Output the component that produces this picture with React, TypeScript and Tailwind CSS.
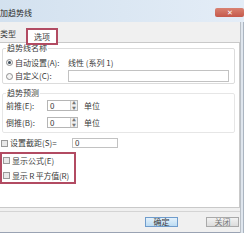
import React from "react";

const font = { fontFamily: '"Noto Sans CJK SC", "Liberation Sans", sans-serif' };

function Radio({ checked }: { checked?: boolean }) {
  return (
    <span className="flex h-[7px] w-[7px] shrink-0 items-center justify-center rounded-full border border-[#8f8f8f] bg-[#f4f4f4]">
      {checked && <span className="h-[3px] w-[3px] rounded-full bg-[#3a4a5a]" />}
    </span>
  );
}

function Check() {
  return <span className="h-[7px] w-[7px] shrink-0 border border-[#9a9a9a] bg-[#e9e9e9]" />;
}

function Spin({ value }: { value: string }) {
  return (
    <div className="flex h-[11px] w-[31px] items-center border border-[#b5b5b5] bg-white">
      <span className="flex-1 pl-[2px] leading-none">{value}</span>
      <div className="flex h-full w-[7px] flex-col border-l border-[#cfcfcf] bg-[#f0f0f0]">
        <span className="flex flex-1 items-center justify-center text-[4px] leading-none text-[#777]">▲</span>
        <span className="flex flex-1 items-center justify-center text-[4px] leading-none text-[#777]">▼</span>
      </div>
    </div>
  );
}

export default function App() {
  return (
    <div className="h-[241px] w-[250px] overflow-hidden bg-white text-[8px] text-[#3a3a3a]" style={font}>
      <div className="w-[244px]">
        {/* title bar */}
        <div className="flex h-[22px] items-start justify-between bg-gradient-to-r from-[#d3e1ef] via-[#dbe7f3] to-[#e4edf7]">
          <span className="mt-[9px] leading-none text-[#2a2a2a]">加趋势线</span>
          <span className="mt-[8px] flex h-[9px] w-[29px] items-center justify-center rounded-[2px] bg-gradient-to-b from-[#d98272] to-[#c4584a] text-[7px] leading-none text-white">
            ✕
          </span>
        </div>

        <div className="flex">
          <div className="flex w-[240px] flex-col bg-[#f0f0f0]">
            {/* tabs */}
            <div className="flex h-[20px] items-end">
              <span className="mb-[4px] leading-none">类型</span>
              <div className="relative z-10 ml-[10px] -mb-[3px] flex h-[17px] w-[32px] items-center justify-center border-2 border-[#b24b62] bg-white">
                <span className="leading-none">选项</span>
              </div>
            </div>

            {/* panel */}
            <div className="flex h-[166px] flex-col border border-l-0 border-[#c9c9c9] bg-white pr-[4px]">
              <fieldset className="ml-[2px] mt-[1px] h-[40px] rounded-[2px] border border-[#dcdcdc] px-[3px]">
                <legend className="px-[1px] leading-none">趋势线名称</legend>
                <div className="mt-[5px] flex h-[11px] items-center gap-[2px]">
                  <Radio checked />
                  <span className="w-[51px] leading-none">自动设置(A):</span>
                  <span className="leading-none">线性 (系列 1)</span>
                </div>
                <div className="mt-[2px] flex h-[12px] items-center gap-[2px]">
                  <Radio />
                  <span className="w-[51px] leading-none">自定义(C):</span>
                  <div className="h-[12px] w-[161px] border border-[#c2c2c2] bg-white" />
                </div>
              </fieldset>

              <fieldset className="ml-[2px] mt-[5px] h-[44px] rounded-[2px] border border-[#e6e6e6] px-[3px]">
                <legend className="px-[1px] leading-none">趋势预测</legend>
                <div className="mt-[3px] flex items-center">
                  <span className="w-[41px] leading-none">前推(E):</span>
                  <Spin value="0" />
                  <span className="ml-[6px] leading-none">单位</span>
                </div>
                <div className="mt-[6px] flex items-center">
                  <span className="w-[41px] leading-none">倒推(B):</span>
                  <Spin value="0" />
                  <span className="ml-[6px] leading-none">单位</span>
                </div>
              </fieldset>

              <div className="mt-[5px] flex h-[10px] items-center gap-[2px] pl-[1px]">
                <Check />
                <span className="w-[60px] whitespace-nowrap leading-none">设置截距(S)=</span>
                <div className="flex h-[10px] w-[46px] items-center border border-[#c2c2c2] pl-[2px] leading-none">0</div>
              </div>

              <div className="mt-[4px] flex h-[32px] w-[76px] flex-col justify-center gap-[7px] border-2 border-[#b24b62] pl-[1px]">
                <div className="flex items-center gap-[2px] whitespace-nowrap">
                  <Check />
                  <span className="leading-none">显示公式(E)</span>
                </div>
                <div className="flex items-center gap-[2px] whitespace-nowrap">
                  <Check />
                  <span className="leading-none tracking-[-0.2px]">显示 R 平方值(R)</span>
                </div>
              </div>
            </div>

            {/* buttons */}
            <div className="mt-[3px] flex h-[22px] items-center justify-end gap-[28px] border-t border-[#d4d4d4] border-b border-b-[#9aa3b3] pr-[1px]">
              <div className="flex h-[10px] w-[33px] items-center justify-center border border-[#6f9ccc] bg-gradient-to-b from-[#e4f1fb] to-[#bcdcf3] leading-none">
                确定
              </div>
              <div className="flex h-[10px] w-[33px] items-center justify-center border border-[#a9a9a9] bg-gradient-to-b from-[#f2f2f2] to-[#dcdcdc] leading-none text-[#777]">
                关闭
              </div>
            </div>
          </div>
          <div className="w-[4px] border-l border-[#b9bfc6] border-r border-r-[#aab4c0] bg-[#dfe6ee]" />
        </div>
      </div>
    </div>
  );
}
